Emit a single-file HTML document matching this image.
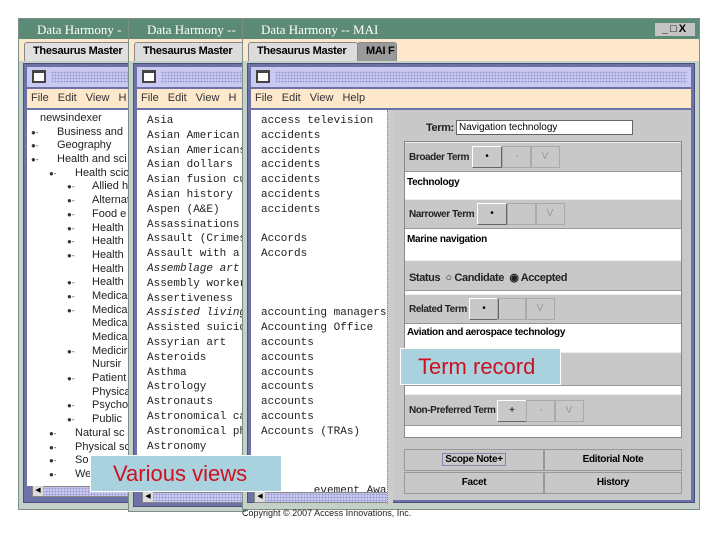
<!DOCTYPE html>
<html><head><meta charset="utf-8"><style>
*{margin:0;padding:0;box-sizing:border-box}
body{width:720px;height:540px;background:#fff;position:relative;overflow:hidden;font-family:"Liberation Sans",sans-serif}
.a{position:absolute}
.win{position:absolute;background:#c4d0c8;border:1px solid #7a9088;overflow:hidden}
.title{position:absolute;left:0;right:0;top:0;height:20px;background:#5b8b76;color:#fff;font-family:"Liberation Serif",serif;font-size:13px;line-height:21px;padding-left:18px;white-space:nowrap}
.tabs{position:absolute;left:0;right:0;top:20px;height:22px;background:#fde8cc}
.tab{position:absolute;top:3px;height:19px;border:1px solid #888;border-bottom:none;border-radius:3px 3px 0 0;background:#dcdcdc;font-size:11px;font-weight:bold;line-height:17px;padding-left:8px;white-space:nowrap;letter-spacing:-0.3px}
.frame{position:absolute;background:#6c72a6;border:1px solid #4a5080}
.tool{position:absolute;left:3px;right:3px;top:3px;height:20px;background:#c9c9f2}
.dots{position:absolute;left:24px;right:4px;top:4px;height:12px;background-image:radial-gradient(#9a9ad0 0.8px,transparent 0.9px);background-size:3px 3px}
.ico{position:absolute;left:5px;top:3px;width:14px;height:13px;border:2px solid #444;border-top-width:3px;background:#fff}
.menu{position:absolute;left:3px;right:3px;top:25px;height:19px;background:#fde8cc;font-size:11px;line-height:19px;color:#333;white-space:nowrap;padding-left:4px;word-spacing:6px}
.list{position:absolute;background:#fff;overflow:hidden;white-space:nowrap}
.mono{font-family:"Liberation Mono",monospace;font-size:11px;line-height:14.8px;color:#222}
.tree{font-size:11px;line-height:13.7px;color:#222}
.tree div{position:relative;height:13.7px}
.tree b{position:absolute;font-weight:normal;font-size:8px;color:#333;top:0}
.sb{position:absolute;height:11px;background:#c9c9f2;border:1px solid #888;background-image:radial-gradient(#9a9ad0 0.8px,transparent 0.9px);background-size:3px 3px}
.sb:before{content:"◀";position:absolute;left:0;top:-1px;width:10px;height:10px;background:#ddd;font-size:7px;line-height:10px;text-align:center}
.g{position:absolute;background:#c8c8c8;left:0;right:0;border-top:1px solid #eee;border-bottom:1px solid #999}
.w{position:absolute;background:#fff;left:0;right:0;font-size:10px;padding-left:2px;font-weight:bold;letter-spacing:-0.3px}
.lbl{position:absolute;font-size:10px;font-weight:bold;letter-spacing:-0.4px;color:#222}
.btn{position:absolute;width:30px;height:22px;border:1px solid #aaa;font-size:10px;text-align:center;line-height:20px;color:#999}
.btn.on{border-color:#fff #666 #666 #fff;color:#000}
.bb{position:absolute;height:22px;border:1px solid #999;background:#c8c8c8;font-size:10px;font-weight:bold;text-align:center;line-height:20px;letter-spacing:-0.3px}
.ov{position:absolute;background:#a9d2de;color:#cc1122;font-size:22px;border:1px solid #fff}
</style></head><body>

<!-- Window 1 -->
<div class="win" style="left:18px;top:18px;width:112px;height:492px">
 <div class="title">Data Harmony -</div>
 <div class="tabs"><div class="tab" style="left:5px;width:120px;background:#e0e0e0">Thesaurus Master</div></div>
 <div class="frame" style="left:4px;top:44px;width:130px;height:440px">
  <div class="tool"><div class="ico"></div><div class="dots"></div></div>
  <div class="menu">File Edit View H</div>
  <div class="list tree" style="left:3px;top:46px;width:130px;height:376px;padding-top:2px">
   <div style="padding-left:13px">newsindexer</div>
   <div style="padding-left:30px"><b style="left:4px">●-</b>Business and</div>
   <div style="padding-left:30px"><b style="left:4px">●-</b>Geography</div>
   <div style="padding-left:30px"><b style="left:4px">●-</b>Health and sci</div>
   <div style="padding-left:48px"><b style="left:22px">●-</b>Health scio</div>
   <div style="padding-left:65px"><b style="left:40px">●-</b>Allied h</div>
   <div style="padding-left:65px"><b style="left:40px">●-</b>Alternat</div>
   <div style="padding-left:65px"><b style="left:40px">●-</b>Food e</div>
   <div style="padding-left:65px"><b style="left:40px">●-</b>Health</div>
   <div style="padding-left:65px"><b style="left:40px">●-</b>Health</div>
   <div style="padding-left:65px"><b style="left:40px">●-</b>Health</div>
   <div style="padding-left:65px">Health</div>
   <div style="padding-left:65px"><b style="left:40px">●-</b>Health</div>
   <div style="padding-left:65px"><b style="left:40px">●-</b>Medica</div>
   <div style="padding-left:65px"><b style="left:40px">●-</b>Medica</div>
   <div style="padding-left:65px">Medica</div>
   <div style="padding-left:65px">Medica</div>
   <div style="padding-left:65px"><b style="left:40px">●-</b>Medicir</div>
   <div style="padding-left:65px">Nursir</div>
   <div style="padding-left:65px"><b style="left:40px">●-</b>Patient</div>
   <div style="padding-left:65px">Physica</div>
   <div style="padding-left:65px"><b style="left:40px">●-</b>Psycho</div>
   <div style="padding-left:65px"><b style="left:40px">●-</b>Public</div>
   <div style="padding-left:48px"><b style="left:22px">●-</b>Natural sc</div>
   <div style="padding-left:48px"><b style="left:22px">●-</b>Physical sc</div>
   <div style="padding-left:48px"><b style="left:22px">●-</b>So</div>
   <div style="padding-left:48px"><b style="left:22px">●-</b>We</div>
  </div>
  <div class="sb" style="left:8px;top:422px;width:120px"></div>
 </div>
</div>

<!-- Window 2 -->
<div class="win" style="left:128px;top:18px;width:118px;height:494px">
 <div class="title">Data Harmony --</div>
 <div class="tabs"><div class="tab" style="left:5px;width:120px">Thesaurus Master</div></div>
 <div class="frame" style="left:4px;top:44px;width:130px;height:444px">
  <div class="tool"><div class="ico"></div><div class="dots"></div></div>
  <div class="menu">File Edit View H</div>
  <div class="list mono" style="left:3px;top:46px;width:130px;height:380px;padding:4px 0 0 10px">
   Asia<br>Asian American r<br>Asian Americans<br>Asian dollars<br>Asian fusion cu<br>Asian history<br>Aspen (A&amp;E)<br>Assassinations<br>Assault (Crimes<br>Assault with a<br><i>Assemblage art</i><br>Assembly worker.<br>Assertiveness<br><i>Assisted living</i><br>Assisted suicide<br>Assyrian art<br>Asteroids<br>Asthma<br>Astrology<br>Astronauts<br>Astronomical ca<br>Astronomical ph<br>Astronomy
  </div>
  <div class="sb" style="left:8px;top:428px;width:120px"></div>
 </div>
</div>

<!-- Window 3 -->
<div class="win" style="left:242px;top:18px;width:458px;height:492px">
 <div class="title">Data Harmony -- MAI</div>
 <div class="a" style="right:4px;top:4px;width:40px;height:13px;font-size:11px;color:#000;letter-spacing:2px;font-weight:bold;background:#c4c4c4;text-align:center;line-height:13px">_□X</div>
 <div class="tabs"><div class="tab" style="left:5px;width:110px">Thesaurus Master</div><div class="tab" style="left:114px;width:40px;background:#9a9a9a">MAI F</div></div>
 <div class="frame" style="left:4px;top:44px;width:448px;height:440px">
  <div class="tool"><div class="ico"></div><div class="dots"></div></div>
  <div class="menu">File Edit View Help</div>
  <div class="list mono" style="left:3px;top:46px;width:136px;height:382px;padding:4px 0 0 10px">
   access television<br>accidents<br>accidents<br>accidents<br>accidents<br>accidents<br>accidents<br><br>Accords<br>Accords<br><br><br><br>accounting managers<br>Accounting Office<br>accounts<br>accounts<br>accounts<br>accounts<br>accounts<br>accounts<br>Accounts (TRAs)<br><br><br><br>&nbsp;&nbsp;&nbsp;&nbsp;&nbsp;&nbsp;&nbsp;&nbsp;evement Award
  </div>
  <div class="sb" style="left:6px;top:428px;width:134px"></div>
  <div class="a" style="left:139px;top:46px;width:6px;height:394px;background:#ccc;border-left:1px dotted #888"></div>
  <!-- right panel -->
  <div class="a" style="left:145px;top:46px;width:298px;height:390px;background:#c8c8c8">
   <div class="lbl" style="left:33px;top:12px;font-size:11px">Term:</div>
   <div class="a" style="left:63px;top:10px;width:177px;height:15px;background:#fff;border:1px solid #666;font-size:10px;padding-left:2px;line-height:13px">Navigation technology</div>
   <div class="a" style="left:11px;top:31px;width:278px;height:297px;border:1px solid #888;background:#fff">
    <div class="g" style="top:0;height:30px"><div class="lbl" style="left:4px;top:9px">Broader Term</div><div class="btn on" style="left:67px;top:3px">•</div><div class="btn" style="left:97px;top:3px">-</div><div class="btn" style="left:125px;top:3px">V</div></div>
    <div class="w" style="top:30px;height:26px;padding-top:5px">Technology</div>
    <div class="g" style="top:57px;height:30px"><div class="lbl" style="left:4px;top:9px">Narrower Term</div><div class="btn on" style="left:72px;top:3px">•</div><div class="btn" style="left:102px;top:3px"></div><div class="btn" style="left:130px;top:3px">V</div></div>
    <div class="w" style="top:87px;height:27px;padding-top:5px">Marine navigation</div>
    <div class="g" style="top:118px;height:31px"><div class="lbl" style="left:4px;top:10px;font-size:11px">Status &nbsp;○ Candidate &nbsp;◉ Accepted</div></div>
    <div class="g" style="top:152px;height:30px"><div class="lbl" style="left:4px;top:9px">Related Term</div><div class="btn on" style="left:64px;top:3px">•</div><div class="btn" style="left:92px;top:3px"></div><div class="btn" style="left:120px;top:3px">V</div></div>
    <div class="w" style="top:182px;height:26px;padding-top:3px">Aviation and aerospace technology</div>
    <div class="g" style="top:210px;height:34px"></div>
    <div class="g" style="top:252px;height:32px"><div class="lbl" style="left:4px;top:10px">Non-Preferred Term</div><div class="btn on" style="left:92px;top:5px;color:#000">+</div><div class="btn" style="left:121px;top:5px">-</div><div class="btn" style="left:149px;top:5px">V</div></div>
   </div>
   <div class="bb" style="left:11px;top:339px;width:140px"><span style="border:1px solid #88a;padding:0 2px">Scope Note+</span></div>
   <div class="bb" style="left:151px;top:339px;width:138px">Editorial Note</div>
   <div class="bb" style="left:11px;top:362px;width:140px">Facet</div>
   <div class="bb" style="left:151px;top:362px;width:138px">History</div>
  </div>
 </div>
</div>

<div class="ov" style="left:400px;top:348px;width:161px;height:37px;line-height:36px;padding-left:17px">Term record</div>
<div class="ov" style="left:90px;top:455px;width:192px;height:37px;line-height:36px;padding-left:22px">Various views</div>
<div class="a" style="left:242px;top:508px;font-size:9px;color:#222;white-space:nowrap">Copyright © 2007 Access Innovations, Inc.</div>
</body></html>
